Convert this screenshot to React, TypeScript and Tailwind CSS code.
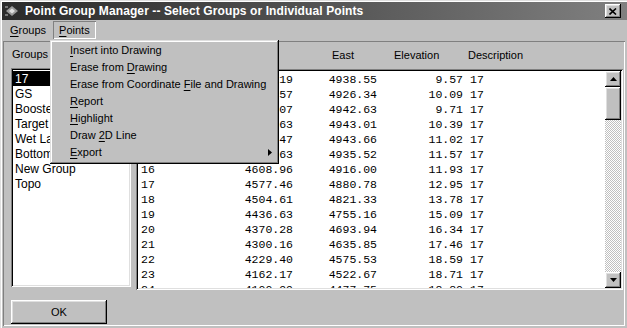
import React from "react";

const raised =
  "shadow-[inset_-1px_-1px_0_#000,inset_1px_1px_0_#fff,inset_-2px_-2px_0_#808080,inset_2px_2px_0_#dfdfdf]";
const sunken =
  "shadow-[inset_1px_1px_0_#808080,inset_-1px_-1px_0_#fff,inset_2px_2px_0_#000,inset_-2px_-2px_0_#dfdfdf]";

const groups = ["17", "GS", "Booster", "Target", "Wet Lands", "Bottom", "New Group", "Topo"];

const rows = [
  ["10", "4975.19", "4938.55", "9.57"],
  ["11", "4902.57", "4926.34", "10.09"],
  ["12", "4830.07", "4942.63", "9.71"],
  ["13", "4762.63", "4943.01", "10.39"],
  ["14", "4710.47", "4943.66", "11.02"],
  ["15", "4658.63", "4935.52", "11.57"],
  ["16", "4608.96", "4916.00", "11.93"],
  ["17", "4577.46", "4880.78", "12.95"],
  ["18", "4504.61", "4821.33", "13.78"],
  ["19", "4436.63", "4755.16", "15.09"],
  ["20", "4370.28", "4693.94", "16.34"],
  ["21", "4300.16", "4635.85", "17.46"],
  ["22", "4229.40", "4575.53", "18.59"],
  ["23", "4162.17", "4522.67", "18.71"],
  ["24", "4100.99", "4477.75", "18.80"],
];

function U({ children }: { children: React.ReactNode }) {
  return <span className="underline underline-offset-[2px]">{children}</span>;
}

const menuItems: React.ReactNode[] = [
  <><U>I</U>nsert into Drawing</>,
  <>Erase from <U>D</U>rawing</>,
  <>Erase from Coordinate <U>F</U>ile and Drawing</>,
  <><U>R</U>eport</>,
  <><U>H</U>ighlight</>,
  <>Draw <U>2</U>D Line</>,
  <><U>E</U>xport</>,
];

export default function App() {
  return (
    <div className="relative w-[627px] h-[328px] overflow-hidden bg-[#c0c0c0] pl-[2px] pt-[2px] font-['Liberation_Sans',Arial,sans-serif] text-black shadow-[inset_1px_1px_0_#dfdfdf,inset_2px_2px_0_#fff]">
      {/* title bar */}
      <div className="flex h-[18px] items-center bg-linear-to-r from-[#2a2a2a] to-[#808080] text-white">
        <svg width="16" height="14" viewBox="0 0 16 14" className="ml-[2px]">
          <path d="M2 7 L8 2 L14 7 L8 12 Z" fill="#9a9a9a" />
          <path d="M5 7 L8 4.5 L11 7 L8 9.5 Z" fill="#e0e0e0" />
          <path d="M1 3 h3 M1 11 h3" stroke="#c0c0c0" strokeWidth="1" />
        </svg>
        <span className="ml-[5px] text-[12px] font-bold tracking-[0.1px]">
          Point Group Manager -- Select Groups or Individual Points
        </span>
        <div className={`ml-auto mr-[6px] flex h-[14px] w-[16px] items-center justify-center bg-[#c0c0c0] ${raised}`}>
          <svg width="8" height="7" viewBox="0 0 8 7">
            <path d="M0.5 0.5 L7 6.5 M7 0.5 L0.5 6.5" stroke="#000" strokeWidth="1.6" />
          </svg>
        </div>
      </div>

      {/* menu bar */}
      <div className="flex h-[20px] items-center text-[11px]">
        <span className="ml-[2px] px-[6px]">
          <U>G</U>roups
        </span>
        <span className="ml-[1px] flex h-[18px] items-center px-[6px] shadow-[inset_1px_1px_0_#808080,inset_-1px_-1px_0_#fff]">
          <span>
            <U>P</U>oints
          </span>
        </span>
      </div>

      {/* main panel */}
      <div className="mt-[1px] ml-[1px] h-[285px] w-[622px] pl-[8px] shadow-[inset_1px_1px_0_#808080,inset_-1px_-1px_0_#fff]">
        <div className="flex gap-[5px]">
          <div className="flex w-[120px] flex-col">
            <div className="flex h-[27px] items-center pl-[1px] text-[11px]">Groups</div>
            <div className={`h-[219px] bg-white px-[2px] pt-[3px] text-[12px] ${sunken}`}>
              {groups.map((g, i) => (
                <div
                  key={g}
                  className={`flex h-[15px] items-center pl-[2px] ${i === 0 ? "bg-black text-white" : ""}`}
                >
                  {g}
                </div>
              ))}
            </div>
          </div>

          <div className="flex w-[487px] flex-col">
            <div className="flex h-[28px] items-center pl-[5px] text-[11px]">
              <span className="w-[100px]">Point</span>
              <span className="w-[91px]">North</span>
              <span className="w-[62px]">East</span>
              <span className="w-[74px]">Elevation</span>
              <span>Description</span>
            </div>
            <div className={`flex h-[221px] bg-white p-[2px] ${sunken}`}>
              <div className="flex-1 overflow-hidden pt-[1px] pl-[3px] font-['Liberation_Mono','Courier_New',monospace] text-[11.5px]">
                {rows.map((r) => (
                  <div key={r[0]} className="flex h-[15px] items-center whitespace-pre">
                    <span className="w-[100px]">{r[0]}</span>
                    <span className="w-[52px] text-right">{r[1]}</span>
                    <span className="w-[84px] text-right">{r[2]}</span>
                    <span className="w-[86px] text-right">{r[3]}</span>
                    <span className="pl-[7px]">17</span>
                  </div>
                ))}
              </div>
              {/* scrollbar */}
              <div className="flex w-[16px] flex-col">
                <div className={`flex h-[16px] items-center justify-center bg-[#c0c0c0] ${raised}`}>
                  <svg width="7" height="4" viewBox="0 0 7 4">
                    <path d="M3.5 0 L7 4 L0 4 Z" fill="#000" />
                  </svg>
                </div>
                <div className={`h-[33px] bg-[#c0c0c0] ${raised}`} />
                <div className="flex-1 bg-[repeating-conic-gradient(#c0c0c0_0%_25%,#fff_0%_50%)] bg-[length:2px_2px]" />
                <div className={`flex h-[16px] items-center justify-center bg-[#c0c0c0] ${raised}`}>
                  <svg width="7" height="4" viewBox="0 0 7 4">
                    <path d="M0 0 L7 0 L3.5 4 Z" fill="#000" />
                  </svg>
                </div>
              </div>
            </div>
          </div>
        </div>

        <button
          className={`mt-[10px] flex h-[24px] w-[96px] items-center justify-center bg-[#c0c0c0] text-[11px] ${raised}`}
        >
          OK
        </button>
      </div>

      {/* dropdown menu */}
      <div className="absolute left-[50px] top-[40px] h-[124px] w-[229px] bg-[#c0c0c0] pt-[2px] text-[11px] shadow-[inset_-1px_-1px_0_#000,inset_1px_1px_0_#dfdfdf,inset_-2px_-2px_0_#808080,inset_2px_2px_0_#fff]">
        {menuItems.map((m, i) => (
          <div key={i} className="relative flex h-[17px] items-center pl-[20px]">
            <span className="whitespace-pre">{m}</span>
            {i === menuItems.length - 1 && (
              <svg width="4" height="7" viewBox="0 0 4 7" className="absolute right-[7px] top-[5px]">
                <path d="M0 0 L4 3.5 L0 7 Z" fill="#000" />
              </svg>
            )}
          </div>
        ))}
      </div>
    </div>
  );
}
